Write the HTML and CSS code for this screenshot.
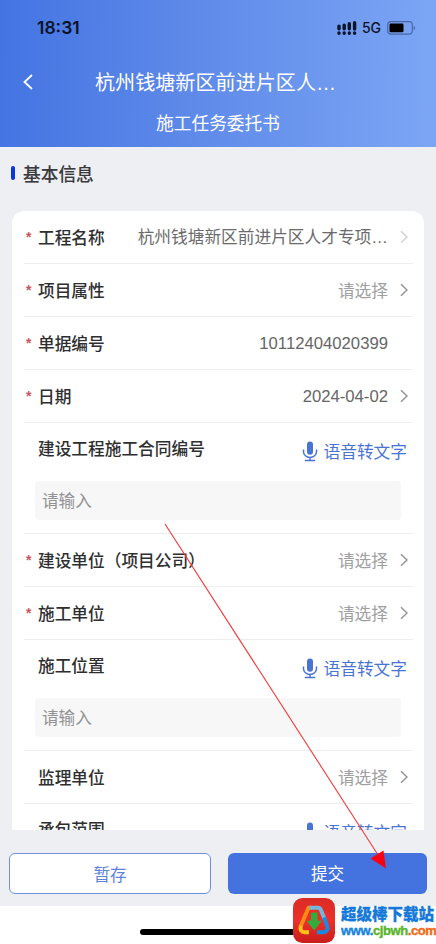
FILE: index.html
```html
<!DOCTYPE html>
<html lang="zh-CN">
<head>
<meta charset="utf-8">
<title>施工任务委托书</title>
<link rel="stylesheet" href="styles.css">
</head>
<body>
<svg class="defs" width="0" height="0" aria-hidden="true">
  <symbol id="chev" viewBox="0 0 8 14"><path d="M1 1.2 7 7 1 12.8" fill="none" stroke="currentColor" stroke-width="1.4"/></symbol>
  <symbol id="mic" viewBox="0 0 16 21"><rect x="5" y=".4" width="6" height="13.4" rx="3" fill="currentColor"/><path d="M1.5 8.5v2.2a6.5 5.7 0 0 0 13 0V8.5M8 16.5v3M2.8 19.6h10.4" fill="none" stroke="currentColor" stroke-width="1.5"/></symbol>
</svg>
<div class="screen">
  <header class="top">
    <div class="status">
      <span class="time">18:31</span>
      <span class="sys">
        <svg width="20" height="15" viewBox="0 0 20 15"><path d="M2 5.2v2.6M7.2 4.2v3.6M12.3 2.8v5M17.6 1.8v6.2M2 12v.2M7.2 12v.2M12.3 12v.2M17.6 12v.2" stroke="#0b1428" stroke-width="3.4" stroke-linecap="round"/></svg>
        <span class="net">5G</span>
        <svg width="29" height="14" viewBox="0 0 29 14"><rect x=".7" y=".7" width="24.6" height="12.4" rx="3.3" fill="none" stroke="#4b67a6" stroke-width="1.2"/><rect x="2.5" y="2.5" width="14" height="8.8" rx="1.4" fill="#000"/><path d="M26.6 5v4q1.5-.6 1.5-2t-1.5-2" fill="#4b67a6"/></svg>
      </span>
    </div>
    <div class="nav">
      <svg class="back" width="10" height="16" viewBox="0 0 10 16"><path d="M9 1 1.5 8 9 15" fill="none" stroke="#fff" stroke-width="1.8"/></svg>
      <h1>杭州钱塘新区前进片区人<span class="dots">…</span></h1>
    </div>
    <div class="sub">施工任务委托书</div>
  </header>
  <main class="content">
    <h2 class="section"><i></i>基本信息</h2>
    <section class="card">
      <div class="row req"><label>工程名称</label><span class="val">杭州钱塘新区前进片区人才专项<span class="dots">…</span></span><svg class="chev pale"><use href="#chev"/></svg></div>
      <div class="row req"><label>项目属性</label><span class="val hint">请选择</span><svg class="chev"><use href="#chev"/></svg></div>
      <div class="row req"><label>单据编号</label><span class="val num">10112404020399</span><span class="chev"></span></div>
      <div class="row req"><label>日期</label><span class="val num">2024-04-02</span><svg class="chev"><use href="#chev"/></svg></div>
      <div class="field">
        <div class="head"><label>建设工程施工合同编号</label><span class="voice"><svg class="mic"><use href="#mic"/></svg>语音转文字</span></div>
        <div class="input">请输入</div>
      </div>
      <div class="row req"><label>建设单位（项目公司）</label><span class="val hint">请选择</span><svg class="chev"><use href="#chev"/></svg></div>
      <div class="row req"><label>施工单位</label><span class="val hint">请选择</span><svg class="chev"><use href="#chev"/></svg></div>
      <div class="field">
        <div class="head"><label>施工位置</label><span class="voice"><svg class="mic"><use href="#mic"/></svg>语音转文字</span></div>
        <div class="input">请输入</div>
      </div>
      <div class="row"><label>监理单位</label><span class="val hint">请选择</span><svg class="chev"><use href="#chev"/></svg></div>
      <div class="field last">
        <div class="head"><label>承包范围</label><span class="voice"><svg class="mic"><use href="#mic"/></svg>语音转文字</span></div>
      </div>
    </section>
  </main>
  <div class="actions">
    <div class="btn save">暂存</div>
    <div class="btn submit">提交</div>
  </div>
  <footer class="home"><i></i></footer>

  <svg class="arrow" viewBox="0 0 436 944"><path d="M165 524 380 858" stroke="#f23a3a" stroke-width="1.1"/><path d="M386 868.5 370.5 858.5 383.5 850.5Z" fill="#fb0012"/></svg>

  <div class="mark">
    <svg width="42" height="45" viewBox="0 0 42 45">
      <defs><linearGradient id="red" x1="0" y1="0" x2="0" y2="1"><stop offset="0" stop-color="#d92b27"/><stop offset=".5" stop-color="#ed3028"/><stop offset="1" stop-color="#c91d1c"/></linearGradient></defs>
      <rect width="42" height="45" rx="9.5" fill="url(#red)"/>
      <g fill="none" stroke-width="4" stroke-linejoin="round">
        <path d="M19 9.8h-3.5L7.8 28" stroke="#ff8b16"/>
        <path d="M7.8 27.5q-1.5 6.5 4 6.7H16" stroke="#ffc21c"/>
        <path d="M16.5 9.8H25q2 0 2.8 2L32 22" stroke="#72b7dc"/>
        <path d="M31 19.5 34.2 28q1.5 5-3.4 6.2H24" stroke="#168be4"/>
      </g>
      <path d="M18 14.5h6.5v8.3h4.3l-7.6 9.7-7.7-9.7H18Z" fill="#32ad3c"/>
    </svg>
    <div class="words"><b class="name">超级棒下载站</b><b class="url">www.<em>cjbwh</em><u>.com</u></b></div>
  </div>
</div>
</body>
</html>
```
FILE: styles.css
```css
* { box-sizing: border-box; }
body { margin: 0; font-family: "Noto Sans CJK SC", sans-serif; background: #fff; }
.defs { position: absolute; }
.screen { position: relative; width: 436px; height: 944px; overflow: hidden; display: flex; flex-direction: column; background: #eeeff3; }

.top { flex: none; height: 147px; background: linear-gradient(91deg, #4374e2 0%, #5f8ae9 45%, #7ca6f5 100%); color: #fff; }
.status { height: 56px; padding: 0 20px 0 37px; display: flex; align-items: center; justify-content: space-between; }
.time { font: 600 17.5px/20px Inter, sans-serif; color: #0b1428; }
.sys { display: flex; align-items: center; }
.net { margin: 0 6px 0 5px; font: 500 14px/16px Inter, sans-serif; color: #0b1428; }
.nav { height: 52px; display: flex; align-items: center; padding-left: 23px; }
.back { flex: none; margin-right: 62px; }
h1 { margin: 0; font-size: 20.1px; font-weight: 400; line-height: 30px; white-space: nowrap; }
.dots { font-family: "Liberation Sans", sans-serif; }
.sub { text-align: center; font-size: 17.7px; line-height: 28px; }

.content { flex: none; height: 683px; overflow: hidden; padding: 0 12px; }
.section { margin: 0; height: 64px; padding-top: 12px; display: flex; align-items: flex-start; font-size: 17.7px; line-height: 28px; font-weight: 500; color: #3a3a3c; -webkit-text-stroke: .1px; }
.section i { width: 4px; height: 14px; margin: 7px 8px 0 -1px; border-radius: 2px; background: #0b37da; }
.card { padding: 0 11px 0 12px; background: #fff; border-radius: 12px; }
.row { height: 53px; display: flex; align-items: center; border-bottom: 1px solid #eeeef0; padding: 0 5px 0 14px; position: relative; }
.req::before { content: "*"; position: absolute; left: 2px; top: 16px; font: bold 14px/20px "Liberation Sans", sans-serif; color: #cb5562; }
label { font-size: 16.7px; line-height: 24px; margin-top: -1px; font-weight: 500; color: #2f2f31; white-space: nowrap; }
.val { margin-left: auto; margin-top: -1px; font-size: 16.7px; line-height: 24px; color: #6b6b6d; white-space: nowrap; }
.num { font-family: "Liberation Sans", sans-serif; font-size: 16.7px; color: #666; padding-top: 2px; }
.hint { color: #a0a0a2; }
.chev { flex: none; width: 8px; height: 14px; margin-left: 12px; color: #929294; }
.pale { color: #cfcfd1; }
.field { height: 111px; border-bottom: 1px solid #eeeef0; padding: 14px 6px 0 11px; }
.last { border: 0; }
.head { height: 44px; display: flex; align-items: flex-start; justify-content: space-between; padding-left: 3px; }
.voice { display: flex; align-items: center; margin-top: 2px; font-size: 16.7px; line-height: 24px; color: #4a74d3; }
.mic { width: 16px; height: 21px; margin-right: 6px; }
.input { height: 39px; margin-right: 6px; padding-left: 7px; border-radius: 4px; background: #f7f7f8; font-size: 16.6px; line-height: 39px; color: #929294; }

.actions { flex: none; height: 76px; padding: 23px 9px 12px; display: flex; gap: 17px; }
.btn { height: 41px; border-radius: 6px; text-align: center; font-size: 16.6px; line-height: 41px; }
.save { width: 202px; border: 1px solid #6e91df; background: #fff; color: #5f83d8; line-height: 40px; }
.submit { width: 199px; background: #4473df; color: #fff; }
.home { flex: 1; background: #fff; padding-top: 23px; }
.home i { display: block; width: 156px; height: 6px; margin: 0 auto; border-radius: 3px; background: #000; }

.arrow { position: absolute; left: 0; top: 0; width: 436px; height: 944px; }
.mark { position: absolute; left: 293px; top: 898px; display: flex; gap: 6px; }
.words { display: flex; flex-direction: column; padding-top: 5px; white-space: nowrap; }
.name { font-size: 15.5px; line-height: 20px; font-weight: 900; color: #1479d8; -webkit-text-stroke: .3px; }
.url { font: bold 13px/16px "Liberation Sans", sans-serif; letter-spacing: -.4px; color: #1683dc; -webkit-text-stroke: .4px; }
.url em { font-style: normal; color: #58b52c; }
.url u { text-decoration: none; color: #f26a1a; }
```
